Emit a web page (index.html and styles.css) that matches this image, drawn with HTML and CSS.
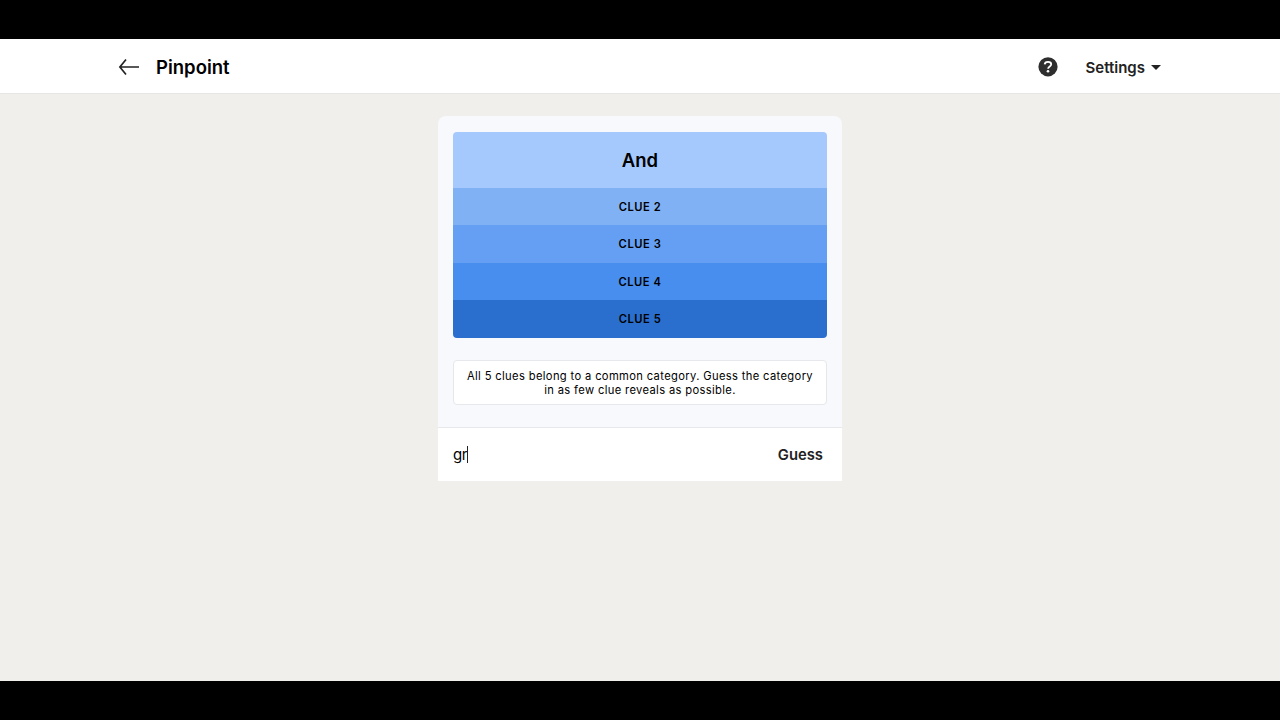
FILE: index.html
```html
<!DOCTYPE html>
<html lang="en">
<head>
  <meta charset="UTF-8">
  <meta name="viewport" content="width=device-width, initial-scale=1.0">
  <title>Pinpoint</title>
  <link rel="stylesheet" href="styles.css">
</head>
<body>
  <header class="topbar">
    <a class="back" aria-label="Back">
      <svg width="22" height="18" viewBox="0 0 22 18" fill="none" stroke="#222" stroke-width="1.7">
        <path d="M21 9H1.800M8 1.500L1.900 9L8 16.500"/>
      </svg>
    </a>
    <h1 class="title">Pinpoint</h1>
    <a class="help" aria-label="Help">
      <svg width="20" height="20" viewBox="0 0 20 20">
        <circle cx="10" cy="9.800" r="9.600" fill="#2e2e2e"/>
        <path d="M6.700 7.400C6.800 5.600 8.300 4.900 10 4.900c1.900 0 3.200.9 3.200 2.400 0 2.200-3.100 2-3.100 4.500" fill="none" stroke="#fff" stroke-width="1.800"/>
        <circle cx="10" cy="14.200" r="1.300" fill="#fff"/>
      </svg>
    </a>
    <button class="settings">Settings <span class="caret"></span></button>
  </header>

  <main class="page">
    <section class="game">
      <div class="board">
        <div class="clues">
          <div class="clue clue-1">And</div>
          <div class="clue clue-2">CLUE 2</div>
          <div class="clue clue-3">CLUE 3</div>
          <div class="clue clue-4">CLUE 4</div>
          <div class="clue clue-5">CLUE 5</div>
        </div>
        <p class="hint">All 5 clues belong to a common category. Guess the category<br>in as few clue reveals as possible.</p>
      </div>
      <div class="guess-bar">
        <div class="guess-input">gr<span class="cursor"></span></div>
        <button class="guess-button">Guess</button>
      </div>
    </section>
  </main>
</body>
</html>
```
FILE: styles.css
```css
* {
  box-sizing: border-box;
}

body {
  margin: 0;
  height: 720px;
  padding: 39px 0;
  background: #000;
  color: #000;
  font-family: Inter, sans-serif;
  display: flex;
  flex-direction: column;
}

button {
  border: none;
  padding: 0;
  background: none;
  font-family: inherit;
}

.topbar {
  height: 55px;
  padding: 1px 119px 0 118px;
  background: #fff;
  border-bottom: 1px solid #e6e6e4;
  display: flex;
  align-items: center;
}

.back,
.help {
  display: flex;
}

.title {
  margin: 0 auto 0 16px;
  font-size: 18.5px;
  font-weight: 600;
}

.settings {
  margin-left: 28px;
  padding-top: 2px;
  display: flex;
  align-items: center;
  gap: 6px;
  color: #222;
  font-size: 15px;
  font-weight: 600;
}

.caret {
  border: 5px solid transparent;
  border-top-color: #222;
  border-bottom: none;
}

.page {
  flex: 1;
  background: #f0efeb;
}

.game {
  width: 404px;
  margin: 22px auto 0;
}

.board {
  height: 311px;
  padding: 15.5px 15px 0;
  background: #f8f9fc;
  border-radius: 8px 8px 0 0;
}

.clues {
  height: 206px;
  border-radius: 4px;
  overflow: hidden;
  display: grid;
  grid-template-rows: 56px repeat(4, 1fr);
}

.clue {
  padding-top: 1px;
  display: flex;
  align-items: center;
  justify-content: center;
  font-size: 11.2px;
  font-weight: 600;
  letter-spacing: 0.55px;
}

.clue-1 {
  padding-top: 0;
  background: #a5c9fd;
  font-size: 18.5px;
  letter-spacing: 0;
}

.clue-2 {
  background: #80b1f5;
}

.clue-3 {
  background: #659ff3;
}

.clue-4 {
  background: #488eee;
}

.clue-5 {
  background: #2b6fce;
}

.hint {
  height: 45px;
  margin: 22.5px 0 0;
  padding-top: 1px;
  background: #fff;
  border: 1px solid #e6e8ec;
  border-radius: 4px;
  display: grid;
  place-content: center;
  text-align: center;
  font-size: 11.2px;
  line-height: 14px;
  letter-spacing: 0.35px;
}

.guess-bar {
  height: 54px;
  padding: 0 19px 0 15px;
  background: #fff;
  border-top: 1px solid #e6e8ec;
  display: flex;
  align-items: center;
  justify-content: space-between;
}

.guess-input {
  display: flex;
  align-items: center;
  font-size: 15px;
  letter-spacing: -0.4px;
}

.cursor {
  width: 1px;
  height: 17px;
  background: #222;
}

.guess-button {
  color: #222;
  font-size: 14.8px;
  font-weight: 600;
}
```
